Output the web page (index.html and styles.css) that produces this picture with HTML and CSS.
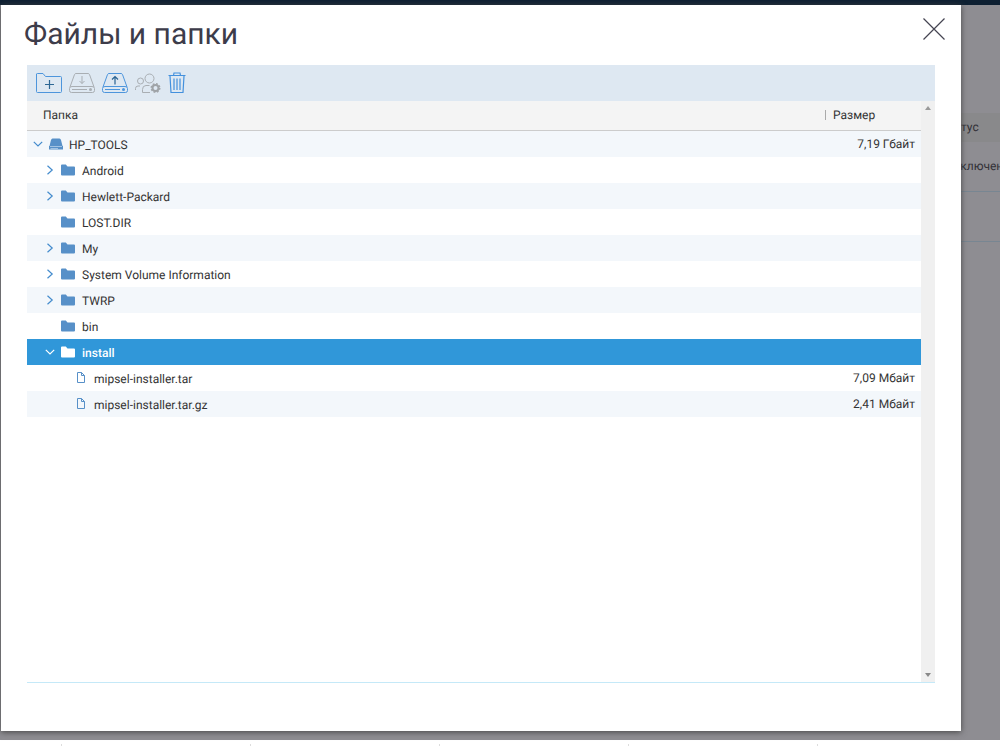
FILE: index.html
```html
<!DOCTYPE html>
<html lang="ru">
<head>
<meta charset="utf-8">
<title>Файлы и папки</title>
<link rel="stylesheet" href="styles.css">
</head>
<body>
<svg class="defs" aria-hidden="true">
  <symbol id="folder" viewBox="0 0 14 12"><path d="M0 1.5Q0 .5 1 .5H4.8L6.5 2.5H13Q14 2.5 14 3.5V10.5Q14 11.5 13 11.5H1Q0 11.5 0 10.5Z" fill="currentColor"/></symbol>
  <symbol id="right" viewBox="0 0 10 10"><path d="M2.5 .8L7.2 5L2.5 9.2" fill="none" stroke="currentColor" stroke-width="1.2"/></symbol>
  <symbol id="down" viewBox="0 0 10 10"><path d="M.8 2.8L5 7L9.2 2.8" fill="none" stroke="currentColor" stroke-width="1.2"/></symbol>
  <symbol id="file" viewBox="0 0 14 12"><path d="M2.5 .5H6.500L9.500 3.500V10.500H2.500ZM6.500 .5V3.500H9.500" fill="none" stroke="currentColor"/></symbol>
</svg>
<div class="topbar"></div>
<main class="stage">
  <div class="backdrop">
    <div class="back-head">тус</div>
    <div class="back-row">дключен</div>
    <div class="back-row"></div>
  </div>
  <section class="dialog" role="dialog" aria-labelledby="title">
    <header class="dialog-head">
      <h1 id="title">Файлы и папки</h1>
      <button class="close" aria-label="Закрыть"><svg width="22" height="22" viewBox="0 0 22 22"><path d="M.5 .5L21.5 21.5M21.5 .5L.5 21.5" stroke="#454452" stroke-width="1.2"/></svg></button>
    </header>
    <div class="browser">
      <div class="toolbar" role="toolbar">
        <button class="tool" aria-label="Создать папку"><svg viewBox="0 0 26 22"><path d="M.5 19.500V2Q.5 1.500 1.500 1.500H7L9.500 4.500H24.500Q25.500 4.500 25.500 5.500V19.500Q25.500 20.500 24.500 20.500H1.500Q.5 20.500 .5 19.500" fill="none" stroke="#4d95dc"/><path d="M13.500 8V17M9 12.500H18" stroke="#2d6794" stroke-width="1.2"/></svg></button>
        <button class="tool" aria-label="Скачать" disabled><svg viewBox="0 0 26 22"><g fill="none" stroke="#a9aeb3"><path d="M1 15L5.500 2.500Q6 1.500 7 1.500H19Q20 1.500 20.500 2.500L25 15M3 14.500H23Q25.500 14.500 25.500 16.500V18.500Q25.500 20.500 23.500 20.500H2.500Q.5 20.500 .5 18.500V16.500Q.5 14.500 3 14.500ZM3 17.500H18"/><path d="M13 4V11.500M10.500 9L13 11.500L15.500 9"/></g><circle cx="21.500" cy="17.500" r="1.500" fill="#a9aeb3"/></svg></button>
        <button class="tool" aria-label="Загрузить"><svg viewBox="0 0 26 22"><g fill="none" stroke="#4d95dc"><path d="M1 15L5.500 2.500Q6 1.500 7 1.500H19Q20 1.500 20.500 2.500L25 15M3 14.500H23Q25.500 14.500 25.500 16.500V18.500Q25.500 20.500 23.500 20.500H2.500Q.5 20.500 .5 18.500V16.500Q.5 14.500 3 14.500ZM3 17.500H18"/><path d="M13 12.500V4.500M10 7.500L13 4.500L16 7.500" stroke="#286292" stroke-width="1.2"/></g><circle cx="21.500" cy="17.500" r="1.500" fill="#4d95dc"/></svg></button>
        <button class="tool" aria-label="Права доступа" disabled><svg viewBox="0 0 26 22"><g fill="none" stroke="#a9aeb3"><circle cx="14.500" cy="6.500" r="4.500"/><circle cx="5.500" cy="9" r="3"/><path d="M.5 18V16.500Q.5 14 3 14H5M15 20.500H7.500V17.500Q7.500 13.500 11 13.500H14.500"/><circle cx="20.500" cy="16" r="3" stroke-width="2" stroke="#9fa3a7"/><circle cx="20.500" cy="16" r="4.300" stroke-width="1.400" stroke-dasharray="1.800 1.577" stroke="#9fa3a7"/></g></svg></button>
        <button class="tool tool-trash" aria-label="Удалить"><svg viewBox="0 0 18 22"><path d="M.5 3.500H17.500M5.500 3.500L6 1H12L12.500 3.500M2 4L3 20.500H15L16 4M6 6.500V18M9 6.500V18M12 6.500V18" fill="none" stroke="#4390dd" stroke-width="1.2"/></svg></button>
      </div>
      <div class="listing">
        <div class="list">
          <table>
            <thead><tr><th scope="col">Папка</th><th scope="col" class="size"><span>Размер</span></th></tr></thead>
            <tbody>
              <tr><td><div class="name root"><svg class="arrow"><use href="#down"/></svg><svg class="icon" viewBox="0 0 14 12"><path d="M3.500 .5H10.500Q11.500 .5 12 2L13.500 8H.5L2 2Q2.500 .5 3.500 .5Z" fill="#5790c8"/><path d="M0 8H14V11.500H0Z" fill="#5790c8"/><path d="M1 8.500H13M1.500 10.500H9" stroke="#b5d0ea" stroke-width=".8"/></svg>HP_TOOLS</div></td><td class="size">7,19 Гбайт</td></tr>
              <tr><td><div class="name"><svg class="arrow"><use href="#right"/></svg><svg class="icon"><use href="#folder"/></svg>Android</div></td><td></td></tr>
              <tr><td><div class="name"><svg class="arrow"><use href="#right"/></svg><svg class="icon"><use href="#folder"/></svg>Hewlett-Packard</div></td><td></td></tr>
              <tr><td><div class="name"><span class="arrow"></span><svg class="icon"><use href="#folder"/></svg>LOST.DIR</div></td><td></td></tr>
              <tr><td><div class="name"><svg class="arrow"><use href="#right"/></svg><svg class="icon"><use href="#folder"/></svg>My</div></td><td></td></tr>
              <tr><td><div class="name"><svg class="arrow"><use href="#right"/></svg><svg class="icon"><use href="#folder"/></svg>System Volume Information</div></td><td></td></tr>
              <tr><td><div class="name"><svg class="arrow"><use href="#right"/></svg><svg class="icon"><use href="#folder"/></svg>TWRP</div></td><td></td></tr>
              <tr><td><div class="name"><span class="arrow"></span><svg class="icon"><use href="#folder"/></svg>bin</div></td><td></td></tr>
              <tr class="selected"><td><div class="name"><svg class="arrow"><use href="#down"/></svg><svg class="icon"><use href="#folder"/></svg>install</div></td><td></td></tr>
              <tr><td><div class="name leaf"><svg class="icon"><use href="#file"/></svg>mipsel-installer.tar</div></td><td class="size">7,09 Мбайт</td></tr>
              <tr><td><div class="name leaf"><svg class="icon"><use href="#file"/></svg>mipsel-installer.tar.gz</div></td><td class="size">2,41 Мбайт</td></tr>
            </tbody>
          </table>
        </div>
        <div class="scrollbar" aria-hidden="true">
          <svg width="6" height="4" viewBox="0 0 6 4"><path d="M0 4L3 0L6 4Z" fill="#999"/></svg>
          <svg width="6" height="4" viewBox="0 0 6 4"><path d="M0 0L3 4L6 0Z" fill="#888"/></svg>
        </div>
      </div>
    </div>
  </section>
</main>
<footer class="footer"><i></i><i></i><i></i><i></i><i></i></footer>
</body>
</html>
```
FILE: styles.css
```css
* { box-sizing: border-box; }
body {
  margin: 0;
  min-height: 100vh;
  display: flex;
  flex-direction: column;
  overflow: hidden;
  background: #fff;
  color: #333;
  font: 12px/16px Roboto, sans-serif;
  text-rendering: geometricPrecision;
}
button { padding: 0; border: 0; background: none; cursor: pointer; }
svg { display: block; }
.defs { position: absolute; width: 0; height: 0; }
.topbar { height: 5px; background: #0e2032; }
.stage { position: relative; flex: 1; display: flex; padding: 0 39px 9px 1px; background: #8e8d92; }
.backdrop { position: absolute; inset: 108px 0 auto auto; width: 47px; color: #333238; }
.back-head { height: 29px; padding: 6px 0 0 8px; background: #89898b; }
.back-row { height: 50px; padding-top: 16px; border-bottom: 1px solid #788692; }
.dialog {
  position: relative;
  flex: 1;
  display: flex;
  flex-direction: column;
  padding: 10px 26px 48px;
  background: #fff;
  box-shadow: 0 1px 6px #444;
}
.dialog-head { display: flex; justify-content: space-between; height: 50px; margin: 0 -16px 0 -3px; }
h1 { margin: 0; color: #3d3c4a; font-size: 30px; line-height: 40px; font-weight: 400; }
.close { width: 34px; height: 28px; display: grid; place-items: center; }
.browser { flex: 1; display: flex; flex-direction: column; border-bottom: 1px solid #c5e9f8; }
.toolbar { display: flex; align-items: center; gap: 7px; height: 36px; padding: 0 9px; background: #dee8f2; }
.tool svg { width: 26px; height: 22px; }
.tool-trash svg { width: 18px; }
.listing { flex: 1; display: flex; }
.list { flex: 1; }
table { width: 100%; border-collapse: separate; border-spacing: 0; table-layout: fixed; }
th { height: 30px; padding: 0 0 1px 16px; background: #f4f4f4; border-bottom: 1px solid #ccc; text-align: left; font-weight: 400; }
th.size { width: 96px; padding-left: 0; }
th.size span { display: block; padding-left: 7px; line-height: 10px; border-left: 1px solid #aaa; }
td { height: 26px; padding: 0; }
tbody tr:nth-child(odd) { background: #f3f7fb; }
td.size { padding: 0 6px 0 0; text-align: right; }
.name { display: flex; align-items: center; padding: 2px 0 0 18px; }
.name.root { padding-left: 6px; }
.name.leaf { padding-left: 48px; }
.arrow { width: 10px; height: 10px; margin-right: 6px; color: #438bcd; }
.icon { width: 14px; height: 12px; margin-right: 7px; color: #5790c8; }
.arrow, .icon { margin-bottom: 3px; }
.root .icon { margin-right: 6px; }
.leaf .icon { margin-right: 5px; }
tbody tr.selected { background: #3097d9; color: #fff; font-weight: 500; }
.selected .arrow, .selected .icon { color: #fff; }
.scrollbar { width: 14px; padding: 5px 4px; display: flex; flex-direction: column; justify-content: space-between; background: #f0f0f0; }
.footer { height: 6px; padding: 4px 0 0 61px; display: flex; gap: 188px; }
.footer i { flex: none; width: 1px; background: #ddd; }
```
